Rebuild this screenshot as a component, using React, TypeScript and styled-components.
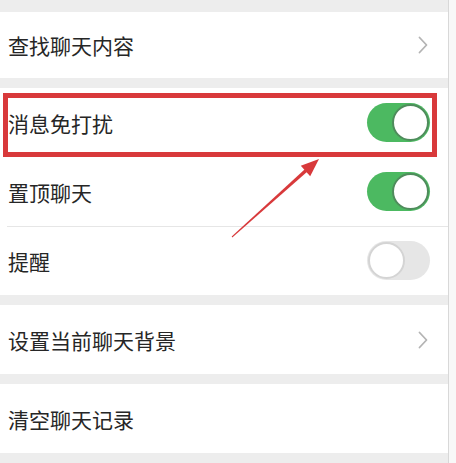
import React from "react"
import styled, { createGlobalStyle } from "styled-components"

const GlobalStyle = createGlobalStyle`
    html, body {
        margin: 0;
        padding: 0;
        background: #f8f8f8;
    }
    body {
        font-family: "Noto Sans CJK SC", "Noto Sans", sans-serif;
    }
`

const Page = styled.div`
    position: relative;
    width: 448px;
    height: 463px;
    background: #ededed;
    border-right: 1px solid #d8d8d8;
    padding-top: 12px;
    box-sizing: content-box;
    display: flex;
    flex-direction: column;
    gap: 10px;
    overflow: hidden;
`

const Group = styled.div`
    background: #ffffff;
    display: flex;
    flex-direction: column;
`

const Row = styled.div<{ $h?: number; $line?: boolean }>`
    height: ${(p) => p.$h || 69}px;
    display: flex;
    flex-direction: row;
    align-items: center;
    justify-content: space-between;
    padding: 0 18px 0 8px;
    box-sizing: border-box;
    position: relative;

    ${(p) => p.$line && `
        &::before {
            content: "";
            position: absolute;
            left: 7px;
            right: 0;
            top: 0;
            height: 1px;
            background: #e6e6e6;
        }
    `}
`

const Label = styled.div`
    font-size: 21px;
    color: #262626;
`

const Chevron = () => (
    <svg width="10" height="18" viewBox="0 0 10 18" style={{ marginRight: 2 }}>
        <path d="M1.5 1.5 L8.5 9 L1.5 16.5" fill="none" stroke="#b4b4b4" strokeWidth="1.8" strokeLinecap="round" strokeLinejoin="round" />
    </svg>
)

const Track = styled.div<{ $on: boolean }>`
    width: 63px;
    height: 39px;
    border-radius: 20px;
    background: ${(p) => (p.$on ? "#4cb961" : "#e6e6e6")};
    position: relative;
`

const Knob = styled.div<{ $on: boolean }>`
    position: absolute;
    top: 1px;
    ${(p) => (p.$on ? "right: 1px;" : "left: 1px;")}
    width: 37px;
    height: 37px;
    box-sizing: border-box;
    border-radius: 50%;
    background: #ffffff;
    border: 2px solid ${(p) => (p.$on ? "#4f8c5c" : "#d4d4d4")};
`

const Toggle = ({ on }: { on: boolean }) => (
    <Track $on={on}>
        <Knob $on={on} />
    </Track>
)

const Highlight = styled.div`
    position: absolute;
    left: 3px;
    top: 93px;
    width: 434px;
    height: 64px;
    border: 5px solid #d8393b;
    box-sizing: border-box;
    pointer-events: none;
`

const Arrow = styled.svg`
    position: absolute;
    left: 0;
    top: 0;
    pointer-events: none;
`

export default function App() {
    return (
        <>
            <GlobalStyle />
            <Page>
                <Group>
                    <Row $h={66}>
                        <Label>查找聊天内容</Label>
                        <Chevron />
                    </Row>
                </Group>

                <Group>
                    <Row>
                        <Label>消息免打扰</Label>
                        <Toggle on={true} />
                    </Row>
                    <Row>
                        <Label>置顶聊天</Label>
                        <Toggle on={true} />
                    </Row>
                    <Row $line>
                        <Label>提醒</Label>
                        <Toggle on={false} />
                    </Row>
                </Group>

                <Group>
                    <Row>
                        <Label>设置当前聊天背景</Label>
                        <Chevron />
                    </Row>
                </Group>

                <Group>
                    <Row>
                        <Label>清空聊天记录</Label>
                    </Row>
                </Group>

                <Highlight />
                <Arrow width="456" height="463" viewBox="0 0 456 463">
                    <polygon points="231.7,236.6 232.3,237.4 307.2,171.8 304.8,169.2" fill="#d8393b" />
                    <polygon points="319,159 300.8,165.8 310.2,176.2" fill="#d8393b" />
                </Arrow>
            </Page>
        </>
    )
}
